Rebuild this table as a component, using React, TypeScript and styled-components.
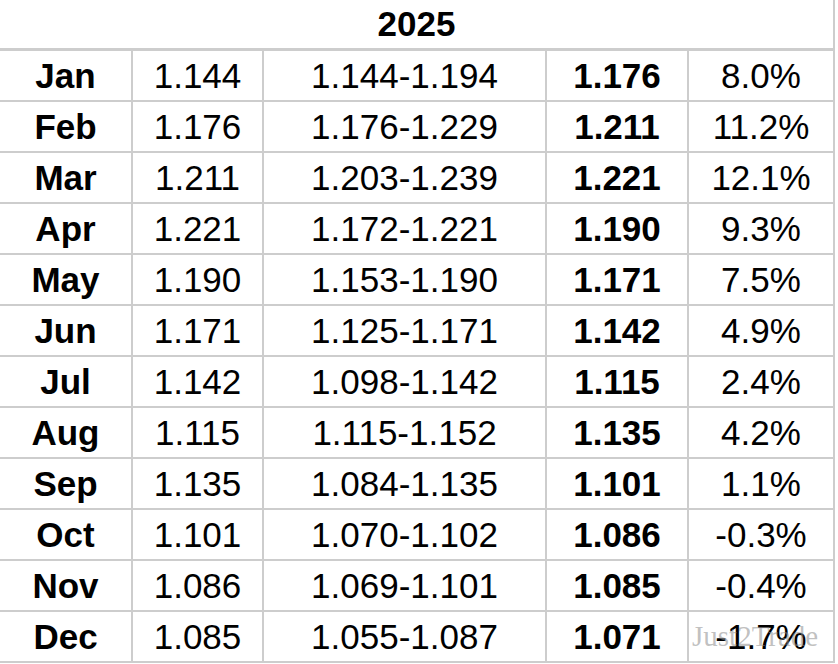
import styled, { createGlobalStyle } from "styled-components";

interface rowProps {
  month: string;
  open: string;
  range: string;
  close: string;
  change: string;
}

const rows: rowProps[] = [
  { month: "Jan", open: "1.144", range: "1.144-1.194", close: "1.176", change: "8.0%" },
  { month: "Feb", open: "1.176", range: "1.176-1.229", close: "1.211", change: "11.2%" },
  { month: "Mar", open: "1.211", range: "1.203-1.239", close: "1.221", change: "12.1%" },
  { month: "Apr", open: "1.221", range: "1.172-1.221", close: "1.190", change: "9.3%" },
  { month: "May", open: "1.190", range: "1.153-1.190", close: "1.171", change: "7.5%" },
  { month: "Jun", open: "1.171", range: "1.125-1.171", close: "1.142", change: "4.9%" },
  { month: "Jul", open: "1.142", range: "1.098-1.142", close: "1.115", change: "2.4%" },
  { month: "Aug", open: "1.115", range: "1.115-1.152", close: "1.135", change: "4.2%" },
  { month: "Sep", open: "1.135", range: "1.084-1.135", close: "1.101", change: "1.1%" },
  { month: "Oct", open: "1.101", range: "1.070-1.102", close: "1.086", change: "-0.3%" },
  { month: "Nov", open: "1.086", range: "1.069-1.101", close: "1.085", change: "-0.4%" },
  { month: "Dec", open: "1.085", range: "1.055-1.087", close: "1.071", change: "-1.7%" },
];

function App() {
  return (
    <>
      <GlobalStyle />
      <Page>
        <Table>
          <Header>2025</Header>
          {rows.map((row, index) => (
            <Row key={index}>
              <Cell bold>{row.month}</Cell>
              <Cell>{row.open}</Cell>
              <Cell>{row.range}</Cell>
              <Cell bold>{row.close}</Cell>
              <Cell>
                {row.change}
                {index === rows.length - 1 && <Watermark>Just2Trade</Watermark>}
              </Cell>
            </Row>
          ))}
        </Table>
      </Page>
    </>
  );
}

const GlobalStyle = createGlobalStyle`
  html, body {
    margin: 0;
    padding: 0;
    background: #ffffff;
  }
  body {
    font-family: "Liberation Sans", Arial, sans-serif;
    color: #000000;
  }
`;

const Page = styled.div`
  width: 838px;
  height: 664px;
  overflow: hidden;
  background: #ffffff;
`;

const Table = styled.div`
  display: grid;
  grid-template-columns: 131px 129px 281px 140px 144px;
  grid-auto-rows: 49px;
  gap: 2px;
  padding: 0 2px 2px 2px;
  margin-left: -2px;
  width: max-content;
  background: #cdcdcd;
`;

const Header = styled.div`
  grid-column: 1 / -1;
  height: 48px;
  display: flex;
  align-items: center;
  justify-content: center;
  background: #ffffff;
  font-size: 35px;
  font-weight: bold;
`;

const Row = styled.div`
  display: contents;
`;

const Cell = styled.div<{ bold?: boolean }>`
  position: relative;
  display: flex;
  align-items: center;
  justify-content: center;
  background: #ffffff;
  font-size: 35px;
  font-weight: ${(props) => (props.bold ? "bold" : "normal")};
  white-space: nowrap;
`;

const Watermark = styled.span`
  position: absolute;
  left: 3px;
  top: 8px;
  font-family: "Liberation Serif", "Times New Roman", serif;
  font-size: 29px;
  color: rgba(140, 140, 140, 0.55);
  pointer-events: none;
`;

export default App;
